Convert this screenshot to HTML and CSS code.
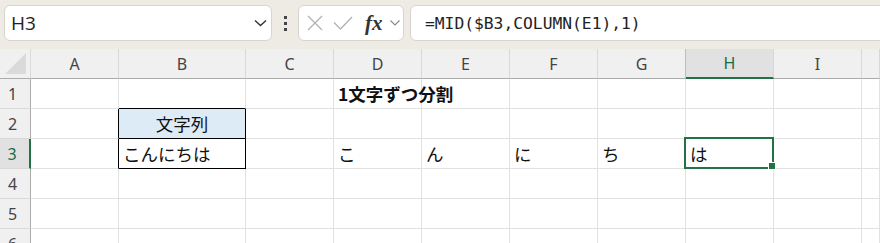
FILE: index.html
```html
<!DOCTYPE html>
<html>
<head>
  <title>文字列の分割</title>
  <meta charset="UTF-8">
  <link rel="stylesheet" href="styles.css">
</head>
<body>
  <!-- Formula bar -->
  <div class="toolbar">
    <div class="name-box">
      <span class="cell-ref">H3</span>
      <svg class="chevron" width="13" height="8" viewBox="0 0 13 8"><polyline points="1,1.5 6.5,6.5 12,1.5" fill="none" stroke="#333" stroke-width="1.4"/></svg>
    </div>
    <div class="grip"><i></i><i></i><i></i></div>
    <div class="fx-box">
      <svg class="icon-cancel" width="16" height="16" viewBox="0 0 16 16"><path d="M1 1 L15 15 M15 1 L1 15" stroke="#b4b4b4" stroke-width="1.4" fill="none"/></svg>
      <svg class="icon-enter" width="20" height="14" viewBox="0 0 20 14"><polyline points="1,6.5 7.5,13 19,1" stroke="#b4b4b4" stroke-width="1.4" fill="none"/></svg>
      <span class="fx">fx</span>
      <svg class="icon-more" width="10" height="6" viewBox="0 0 10 6"><polyline points="0.5,0.5 5,5 9.5,0.5" stroke="#888" stroke-width="1.1" fill="none"/></svg>
    </div>
    <div class="formula">=MID($B3,COLUMN(E1),1)</div>
  </div>

  <!-- Sheet grid -->
  <div class="sheet">
    <div class="corner"><svg width="31" height="30" viewBox="0 0 31 30"><polygon points="5,25 26,25 26,4" fill="#dadada"/></svg></div>
    <div class="col-head">A</div>
    <div class="col-head">B</div>
    <div class="col-head">C</div>
    <div class="col-head">D</div>
    <div class="col-head">E</div>
    <div class="col-head">F</div>
    <div class="col-head before-selected">G</div>
    <div class="col-head selected">H</div>
    <div class="col-head">I</div>
    <div class="col-head"></div>

    <div class="row-head">1</div>
    <div class="cell"></div>
    <div class="cell edge-b"></div>
    <div class="cell"></div>
    <div class="cell title">1文字ずつ分割</div>
    <div class="cell"></div>
    <div class="cell"></div>
    <div class="cell"></div>
    <div class="cell"></div>
    <div class="cell"></div>
    <div class="cell"></div>

    <div class="row-head">2</div>
    <div class="cell edge-r"></div>
    <div class="cell boxed label">文字列</div>
    <div class="cell"></div>
    <div class="cell"></div>
    <div class="cell"></div>
    <div class="cell"></div>
    <div class="cell"></div>
    <div class="cell"></div>
    <div class="cell"></div>
    <div class="cell"></div>

    <div class="row-head selected">3</div>
    <div class="cell edge-r"></div>
    <div class="cell boxed">こんにちは</div>
    <div class="cell"></div>
    <div class="cell">こ</div>
    <div class="cell">ん</div>
    <div class="cell">に</div>
    <div class="cell">ち</div>
    <div class="cell active">は<span class="cursor"></span><span class="handle"></span></div>
    <div class="cell"></div>
    <div class="cell"></div>

    <div class="row-head">4</div>
    <div class="cell"></div><div class="cell"></div><div class="cell"></div><div class="cell"></div><div class="cell"></div>
    <div class="cell"></div><div class="cell"></div><div class="cell"></div><div class="cell"></div><div class="cell"></div>

    <div class="row-head">5</div>
    <div class="cell"></div><div class="cell"></div><div class="cell"></div><div class="cell"></div><div class="cell"></div>
    <div class="cell"></div><div class="cell"></div><div class="cell"></div><div class="cell"></div><div class="cell"></div>

    <div class="row-head">6</div>
    <div class="cell"></div><div class="cell"></div><div class="cell"></div><div class="cell"></div><div class="cell"></div>
    <div class="cell"></div><div class="cell"></div><div class="cell"></div><div class="cell"></div><div class="cell"></div>
  </div>
</body>
</html>
```

FILE: styles.css
```css
* {
  box-sizing: border-box;
}

body {
  margin: 0;
  width: 880px;
  height: 243px;
  overflow: hidden;
  background: #fff;
  font-family: "Noto Sans CJK JP", sans-serif;
}

/* formula bar */

.toolbar {
  display: flex;
  align-items: flex-start;
  height: 49px;
  padding: 5px 0 0 4px;
  background: #eeebe4;
}

.name-box,
.fx-box,
.formula {
  height: 36px;
  background: #fff;
  border: 1px solid #d8d5ce;
  border-radius: 6px;
  display: flex;
  align-items: center;
}

.name-box {
  width: 268px;
  justify-content: space-between;
  padding: 0 4px 0 6px;
}

.cell-ref {
  font-family: "Open Sans", sans-serif;
  font-size: 19px;
  color: #222;
}

.grip {
  width: 26px;
  height: 36px;
  display: flex;
  flex-direction: column;
  align-items: center;
  justify-content: center;
  gap: 3px;
}

.grip i {
  width: 3px;
  height: 3px;
  background: #444;
}

.fx-box {
  width: 106px;
  margin-right: 6px;
  padding-left: 8px;
}

.icon-enter {
  margin-left: 10px;
}

.fx {
  margin-left: 12px;
  font-family: "Liberation Serif", serif;
  font-style: italic;
  font-weight: bold;
  font-size: 21px;
  color: #333;
  line-height: 1;
}

.icon-more {
  margin-left: 7px;
}

.formula {
  flex: 1;
  margin-right: -20px;
  padding-left: 14px;
  font-family: "DejaVu Sans Mono", monospace;
  font-size: 16.3px;
  color: #222;
}

/* sheet */

.sheet {
  display: grid;
  grid-template-columns: 31px 88px 127px repeat(7, 88px) 1fr;
  grid-auto-rows: 30px;
}

.corner {
  background: #f0f0f0;
  border-right: 1px solid #dadada;
  border-bottom: 1px solid #ababab;
}

.corner svg {
  display: block;
}

.col-head {
  background: #f0f0f0;
  border-right: 1px solid #d8d8d8;
  border-bottom: 1px solid #ababab;
  display: flex;
  align-items: center;
  justify-content: center;
  font-family: "Noto Sans", sans-serif;
  font-size: 16px;
  color: #444;
}

.col-head.before-selected {
  border-right-color: #bdbdbd;
}

.col-head.selected {
  background: #e1e1e1;
  border-bottom: 2px solid #217346;
  color: #1d6b41;
}

.row-head {
  background: #f0f0f0;
  border-right: 1px solid #ababab;
  border-bottom: 1px solid #d8d8d8;
  display: flex;
  align-items: center;
  justify-content: center;
  padding-right: 5px;
  font-family: "Noto Sans", sans-serif;
  font-size: 16px;
  color: #444;
}

.row-head.selected {
  background: #e1e1e1;
  border-right: 2px solid #217346;
  color: #1d6b41;
}

.cell {
  border-right: 1px solid #e1e1e1;
  border-bottom: 1px solid #e1e1e1;
  display: flex;
  align-items: center;
  padding-left: 4px;
  font-size: 17.5px;
  line-height: 1;
  color: #111;
  white-space: nowrap;
}

.cell.title {
  font-weight: bold;
}

.cell.edge-b {
  border-bottom-color: #000;
}

.cell.edge-r {
  border-right-color: #000;
}

.cell.boxed {
  border-right-color: #000;
  border-bottom-color: #000;
}

.cell.label {
  background: #ddebf7;
  justify-content: center;
  padding-left: 0;
}

.cell.active {
  position: relative;
}

.cursor {
  position: absolute;
  left: -2px;
  top: -2px;
  right: -1px;
  bottom: -1px;
  border: 2px solid #217346;
}

.handle {
  position: absolute;
  right: -3px;
  bottom: -2px;
  width: 8px;
  height: 8px;
  background: #217346;
  border: 1px solid #fff;
}
```
